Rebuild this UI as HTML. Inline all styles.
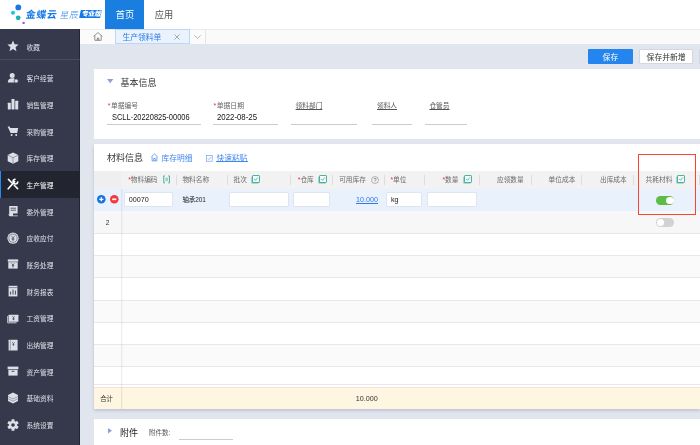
<!DOCTYPE html>
<html lang="zh-CN"><head><meta charset="utf-8"><title>生产领料单</title>
<style>
html,body{margin:0;padding:0;}
body{width:700px;height:445px;overflow:hidden;position:relative;background:#e1e5ee;font-family:"Liberation Sans","Noto Sans CJK SC",sans-serif;-webkit-text-size-adjust:none;}
.a{position:absolute;}
.t{position:absolute;white-space:nowrap;}
.u{text-decoration:underline;text-underline-offset:1px;text-decoration-thickness:0.6px;}
.r{color:#f03030;}
.inp{position:absolute;background:#fff;border:0.6px solid #dfe4ee;box-sizing:border-box;border-radius:1px;}
.sep{position:absolute;width:0.7px;background:#dcdde1;top:175px;height:10px;}
.ln{position:absolute;height:0.7px;background:#cbcccf;}
svg{position:absolute;overflow:visible;}
#w{position:absolute;left:0;top:0;width:700px;height:445px;will-change:transform;}
</style></head><body><div id="w">

<div class="a" style="left:0;top:0;width:700px;height:29px;background:#fff;"></div>
<svg style="left:0;top:0" width="105" height="29" viewBox="0 0 105 29">
<circle cx="18.3" cy="7.4" r="2.9" fill="#1478e6"/>
<circle cx="13.0" cy="12.8" r="2.0" fill="#18c0ee"/>
<circle cx="18.2" cy="17.8" r="2.4" fill="#16b4ac"/>
<circle cx="23.6" cy="22.9" r="1.2" fill="#a050f0"/>
</svg>
<div class="t " style="left:26px;top:8.70px;font-size:9.8px;color:#1478e6;line-height:12px;letter-spacing:0.7px;font-weight:700;transform:skewX(-8deg);transform-origin:0 50%;">金蝶云</div>
<div class="t " style="left:59.6px;top:8.80px;font-size:9.0px;color:#3a8cf0;line-height:12px;letter-spacing:0.5px;font-weight:300;transform:skewX(-10deg);transform-origin:0 50%;">星辰</div>
<div class="a" style="left:80.4px;top:10.4px;width:21.4px;height:7.8px;background:#1478e6;transform:skewX(-12deg);border-radius:0.5px;"></div>
<div class="t " style="left:81.8px;top:8.30px;font-size:6.4px;color:#fff;line-height:12px;font-weight:900;transform:skewX(-10deg);transform-origin:0 50%;">专业版</div>
<div class="a" style="left:105px;top:0;width:39px;height:29px;background:#1a7ee0;"></div>
<div class="t " style="left:115.8px;top:8.90px;font-size:9.2px;color:#fff;line-height:12px;">首页</div>
<div class="t " style="left:154.8px;top:8.90px;font-size:9.2px;color:#555;line-height:12px;">应用</div>
<div class="a" style="left:80px;top:29px;width:620px;height:15px;background:#fafafa;border-top:0.5px solid #ececec;box-sizing:border-box;"></div>
<div class="a" style="left:80px;top:29px;width:125px;height:15px;background:#fbfbfb;border-top:0.5px solid #ececec;box-sizing:border-box;"></div>
<div class="a" style="left:205px;top:29px;width:0.6px;height:15px;background:#e6e6e6;"></div>
<svg style="left:93px;top:32px" width="10" height="9" viewBox="0 0 10 9"><path d="M0.6 4.4 L5 0.6 L9.4 4.4 M1.8 3.6 V8.3 H8.2 V3.6 M4.3 8.3 V6 H5.7 V8.3" fill="none" stroke="#666" stroke-width="0.7" stroke-linejoin="round"/></svg>
<div class="a" style="left:115.3px;top:29.2px;width:75.2px;height:15.2px;background:#e9f2fd;border:0.6px solid #bcd6f6;box-sizing:border-box;"></div>
<div class="t " style="left:122.4px;top:31.90px;font-size:7.8px;color:#2b7be4;line-height:12px;">生产领料单</div>
<svg style="left:174.2px;top:34.2px" width="6" height="6" viewBox="0 0 6 6"><path d="M0.4 0.4 L5.6 5.6 M5.6 0.4 L0.4 5.6" stroke="#777" stroke-width="0.6" fill="none"/></svg>
<svg style="left:194px;top:35.3px" width="7" height="4" viewBox="0 0 7 4"><path d="M0.3 0.3 L3.5 3.4 L6.7 0.3" stroke="#888" stroke-width="0.6" fill="none"/></svg>
<div class="a" style="left:0;top:29px;width:80px;height:416px;background:#35394b;border-right:0.6px solid #23252f;box-sizing:border-box;"></div>
<div class="a" style="left:0;top:58.6px;width:80px;height:0.6px;background:#474b5d;"></div>
<div class="a" style="left:0;top:171.4px;width:80px;height:26.6px;background:#22242f;"></div>
<div class="a" style="left:0;top:171.4px;width:1.4px;height:26.6px;background:#2a8af5;"></div>
<div class="t " style="left:26.6px;top:41.60px;font-size:6.7px;color:#dfe2ea;line-height:12px;">收藏</div>
<svg style="left:7.300000000000001px;top:40.30px" width="12" height="12" viewBox="0 0 12 12"><polygon points="6.00,0.50 7.59,4.22 11.61,4.58 8.57,7.23 9.47,11.17 6.00,9.10 2.53,11.17 3.43,7.23 0.39,4.58 4.41,4.22" fill="#dcdfe8"/></svg>
<svg style="left:7.300000000000001px;top:71.80px" width="12" height="12" viewBox="0 0 12 12"><circle cx="5.2" cy="3.6" r="2.5" fill="#dcdfe8"/><path d="M0.8 10.6 C0.8 7.4 2.6 6.2 5.2 6.2 C7.2 6.2 8.4 6.8 9 8 L9 10.6 Z" fill="#dcdfe8"/><circle cx="9.2" cy="9" r="2.1" fill="#dcdfe8" stroke="#35394b" stroke-width="0.7"/></svg>
<div class="t " style="left:26.6px;top:73.20px;font-size:6.7px;color:#dfe2ea;line-height:12px;">客户经营</div>
<svg style="left:7.300000000000001px;top:98.47px" width="12" height="12" viewBox="0 0 12 12"><rect x="0.8" y="4.8" width="3" height="6.6" rx="0.4" fill="#dcdfe8"/><rect x="4.5" y="1" width="3" height="10.4" rx="0.4" fill="#dcdfe8"/><rect x="8.2" y="2.8" width="3" height="8.6" rx="0.4" fill="#dcdfe8"/></svg>
<div class="t " style="left:26.6px;top:99.87px;font-size:6.7px;color:#dfe2ea;line-height:12px;">销售管理</div>
<svg style="left:7.300000000000001px;top:125.14px" width="12" height="12" viewBox="0 0 12 12"><path d="M0.6 1.6 H2.4 L3.4 3 H11.2 L10.2 8 H3.6 Z" fill="#dcdfe8"/><circle cx="4.6" cy="10" r="1" fill="#dcdfe8"/><circle cx="9.2" cy="10" r="1" fill="#dcdfe8"/></svg>
<div class="t " style="left:26.6px;top:126.54px;font-size:6.7px;color:#dfe2ea;line-height:12px;">采购管理</div>
<svg style="left:7.300000000000001px;top:151.81px" width="12" height="12" viewBox="0 0 12 12"><path d="M6 0.5 L11.3 3 V9.2 L6 11.8 L0.7 9.2 V3 Z" fill="#dcdfe8"/><path d="M0.9 3.2 L6 5.7 L11.1 3.2 M6 5.7 V11.6" stroke="#6a6e80" stroke-width="0.6" fill="none"/></svg>
<div class="t " style="left:26.6px;top:153.21px;font-size:6.7px;color:#dfe2ea;line-height:12px;">库存管理</div>
<svg style="left:7.300000000000001px;top:178.48px" width="12" height="12" viewBox="0 0 12 12"><path d="M1.2 10.8 L7.6 3.6 M8 1.2 A2.4 2.4 0 1 0 10.8 4" stroke="#fff" stroke-width="1.6" fill="none" stroke-linecap="round"/><path d="M1.4 1.4 L5 5 M7.2 7.2 L10.6 10.6" stroke="#fff" stroke-width="1.5" fill="none" stroke-linecap="round"/></svg>
<div class="t " style="left:26.6px;top:179.88px;font-size:6.7px;color:#fff;line-height:12px;">生产管理</div>
<svg style="left:7.300000000000001px;top:205.15px" width="12" height="12" viewBox="0 0 12 12"><path d="M2.2 1 H10.6 V8.4 H6 V11 H2.2 Z" fill="#dcdfe8"/><path d="M3.6 3.2 H9 M3.6 5.2 H9" stroke="#35394b" stroke-width="0.8"/><path d="M0.6 8.6 L3 10.4 H10.8 V11.2 H2.6 Z" fill="#dcdfe8"/></svg>
<div class="t " style="left:26.6px;top:206.55px;font-size:6.7px;color:#dfe2ea;line-height:12px;">委外管理</div>
<svg style="left:7.300000000000001px;top:231.82px" width="12" height="12" viewBox="0 0 12 12"><circle cx="6" cy="6.2" r="5.6" fill="#dcdfe8"/><circle cx="6" cy="6.2" r="4.1" fill="none" stroke="#4a4e60" stroke-width="0.6"/><path d="M4.4 3.8 L6 5.9 L7.6 3.8 M6 5.9 V9 M4.6 6.4 H7.4 M4.6 7.6 H7.4" stroke="#4a4e60" stroke-width="0.7" fill="none"/></svg>
<div class="t " style="left:26.6px;top:233.22px;font-size:6.7px;color:#dfe2ea;line-height:12px;">应收应付</div>
<svg style="left:7.300000000000001px;top:258.49px" width="12" height="12" viewBox="0 0 12 12"><rect x="0.8" y="1.4" width="10.4" height="2.3" fill="#dcdfe8"/><rect x="1.3" y="4.2" width="9.4" height="6.4" fill="#dcdfe8"/><path d="M4.6 5.4 L6 7 L7.4 5.4 M6 7 V9.6 M4.8 7.6 H7.2" stroke="#35394b" stroke-width="0.7" fill="none"/></svg>
<div class="t " style="left:26.6px;top:259.89px;font-size:6.7px;color:#dfe2ea;line-height:12px;">账务处理</div>
<svg style="left:7.300000000000001px;top:285.16px" width="12" height="12" viewBox="0 0 12 12"><rect x="1.6" y="0.8" width="8.8" height="10.6" fill="#dcdfe8"/><path d="M3.6 9.6 V6.6 M6 9.6 V4.6 M8.4 9.6 V5.6" stroke="#35394b" stroke-width="0.9"/><path d="M1.6 2.6 H10.4" stroke="#35394b" stroke-width="0.5"/></svg>
<div class="t " style="left:26.6px;top:286.56px;font-size:6.7px;color:#dfe2ea;line-height:12px;">财务报表</div>
<svg style="left:7.300000000000001px;top:311.83px" width="12" height="12" viewBox="0 0 12 12"><rect x="1.6" y="2.8" width="9.8" height="7" rx="0.4" fill="#dcdfe8"/><path d="M0.7 4 V10.8 H9.6" stroke="#dcdfe8" stroke-width="0.9" fill="none"/><path d="M5.4 4.2 L6.5 5.6 L7.6 4.2 M6.5 5.6 V8.2 M5.5 6.4 H7.5 M5.5 7.3 H7.5" stroke="#35394b" stroke-width="0.6" fill="none"/></svg>
<div class="t " style="left:26.6px;top:313.23px;font-size:6.7px;color:#dfe2ea;line-height:12px;">工资管理</div>
<svg style="left:7.300000000000001px;top:338.50px" width="12" height="12" viewBox="0 0 12 12"><rect x="1.6" y="0.8" width="9" height="10.8" rx="0.4" fill="#dcdfe8"/><path d="M3.4 0.8 V11.6" stroke="#6a6e80" stroke-width="0.5"/><path d="M5.2 3.2 L6.4 4.6 L7.6 3.2 M6.4 4.6 V7 M5.4 5.4 H7.4" stroke="#35394b" stroke-width="0.6" fill="none"/></svg>
<div class="t " style="left:26.6px;top:339.90px;font-size:6.7px;color:#dfe2ea;line-height:12px;">出纳管理</div>
<svg style="left:7.300000000000001px;top:365.17px" width="12" height="12" viewBox="0 0 12 12"><rect x="0.6" y="1.6" width="10.8" height="2.6" fill="#dcdfe8"/><rect x="1.4" y="4.8" width="9.2" height="5.8" fill="#dcdfe8"/><rect x="4.6" y="5.8" width="2.8" height="0.9" fill="#35394b"/></svg>
<div class="t " style="left:26.6px;top:366.57px;font-size:6.7px;color:#dfe2ea;line-height:12px;">资产管理</div>
<svg style="left:7.300000000000001px;top:391.84px" width="12" height="12" viewBox="0 0 12 12"><path d="M6 0.4 L11 2.9 V8.9 L6 11.6 L1 8.9 V2.9 Z" fill="#dcdfe8"/><path d="M1 4.4 L6 7 L11 4.4 M1 6.6 L6 9.2 L11 6.6" stroke="#6a6e80" stroke-width="0.55" fill="none"/></svg>
<div class="t " style="left:26.6px;top:393.24px;font-size:6.7px;color:#dfe2ea;line-height:12px;">基础资料</div>
<svg style="left:7.300000000000001px;top:418.51px" width="12" height="12" viewBox="0 0 12 12"><circle cx="6" cy="6" r="4" fill="#dcdfe8"/><rect x="4.5" y="0.3" width="3" height="3" rx="0.5" fill="#dcdfe8" transform="rotate(0 6 6)"/><rect x="4.5" y="0.3" width="3" height="3" rx="0.5" fill="#dcdfe8" transform="rotate(60 6 6)"/><rect x="4.5" y="0.3" width="3" height="3" rx="0.5" fill="#dcdfe8" transform="rotate(120 6 6)"/><rect x="4.5" y="0.3" width="3" height="3" rx="0.5" fill="#dcdfe8" transform="rotate(180 6 6)"/><rect x="4.5" y="0.3" width="3" height="3" rx="0.5" fill="#dcdfe8" transform="rotate(240 6 6)"/><rect x="4.5" y="0.3" width="3" height="3" rx="0.5" fill="#dcdfe8" transform="rotate(300 6 6)"/><circle cx="6" cy="6" r="1.8" fill="#35394b"/></svg>
<div class="t " style="left:26.6px;top:419.91px;font-size:6.7px;color:#dfe2ea;line-height:12px;">系统设置</div>
<div class="a" style="left:588px;top:48.8px;width:44.6px;height:15.6px;background:#2585ee;border-radius:1px;"></div>
<div class="t " style="left:602.6px;top:51.50px;font-size:7.8px;color:#fff;line-height:12px;">保存</div>
<div class="a" style="left:639.4px;top:48.8px;width:53.2px;height:15.6px;background:#fff;border:0.6px solid #d3d6dc;box-sizing:border-box;border-radius:1px;"></div>
<div class="t " style="left:646.6px;top:51.50px;font-size:7.8px;color:#333;line-height:12px;">保存并新增</div>
<div class="a" style="left:699.4px;top:48.8px;width:10px;height:15.6px;background:#fff;border:0.6px solid #d3d6dc;box-sizing:border-box;"></div>
<div class="a" style="left:94px;top:69px;width:606px;height:70.4px;background:#fff;"></div>
<svg style="left:106.8px;top:79.2px" width="6.4" height="4.4" viewBox="0 0 6 4"><path d="M0 0 H6 L3 4 Z" fill="#929edb"/></svg>
<div class="t " style="left:120.4px;top:76.80px;font-size:9px;color:#333;line-height:12px;">基本信息</div>
<div class="t " style="left:107.8px;top:99.50px;font-size:6.8px;color:#666;line-height:12px;"><span class="r" style="margin-right:0.5px">*</span>单据编号</div>
<div class="t " style="left:111.8px;top:111.30px;font-size:8.5px;color:#151515;line-height:12px;transform:scaleX(0.878);transform-origin:0 50%;">SCLL-20220825-00006</div>
<div class="ln" style="left:107px;top:124.2px;width:94px;"></div>
<div class="t " style="left:213.6px;top:99.50px;font-size:6.8px;color:#666;line-height:12px;"><span class="r" style="margin-right:0.5px">*</span>单据日期</div>
<div class="t " style="left:217px;top:111.30px;font-size:8.5px;color:#151515;line-height:12px;transform:scaleX(0.92);transform-origin:0 50%;">2022-08-25</div>
<div class="ln" style="left:213px;top:124.2px;width:65px;"></div>
<div class="t u" style="left:295.6px;top:99.50px;font-size:6.7px;color:#555;line-height:12px;">领料部门</div>
<div class="ln" style="left:291.4px;top:124.2px;width:66px;"></div>
<div class="t u" style="left:377px;top:99.50px;font-size:6.7px;color:#555;line-height:12px;">领料人</div>
<div class="ln" style="left:372.4px;top:124.2px;width:39.6px;"></div>
<div class="t u" style="left:429.4px;top:99.50px;font-size:6.7px;color:#555;line-height:12px;">仓管员</div>
<div class="ln" style="left:425px;top:124.2px;width:41.6px;"></div>
<div class="a" style="left:94px;top:144px;width:606px;height:265.4px;background:#fff;box-shadow:0 1.5px 3px rgba(120,130,160,.38);"></div>
<div class="t " style="left:107px;top:152.00px;font-size:9px;color:#333;line-height:12px;">材料信息</div>
<svg style="left:151.3px;top:152.9px" width="7" height="8.8" viewBox="0 0 7 8.2"><path d="M0.4 3.6 L3.5 0.6 L6.6 3.6 M1.1 3.2 V7.6 H5.9 V3.2 M2.7 7.6 V5.2 H4.3 V7.6" fill="none" stroke="#4f8cf0" stroke-width="0.75" stroke-linejoin="round"/></svg>
<div class="t " style="left:161.6px;top:152.70px;font-size:7.75px;color:#3f86f0;line-height:12px;">库存明细</div>
<svg style="left:206px;top:154.6px" width="7" height="7" viewBox="0 0 7 7"><rect x="0.4" y="0.4" width="5.8" height="5.8" fill="none" stroke="#5b93f0" stroke-width="0.6"/><path d="M1.8 3.4 L3 4.6 L5 2" fill="none" stroke="#5b93f0" stroke-width="0.6"/></svg>
<div class="t " style="left:216.4px;top:152.70px;font-size:7.75px;color:#3f86f0;line-height:12px;">快速粘贴</div>
<div class="a" style="left:216.4px;top:161.4px;width:31.6px;height:0.6px;background:#3f86f0;"></div>
<div class="a" style="left:94px;top:170.6px;width:606px;height:18.4px;background:#f2f2f3;"></div>
<div class="a" style="left:94px;top:170.6px;width:27.3px;height:18.4px;background:#efeff0;"></div>
<div class="a" style="left:94px;top:189.00px;width:606px;height:22.20px;background:#e9f1fd;"></div>
<div class="a" style="left:94px;top:211.20px;width:606px;height:22.20px;background:#f7f7f7;"></div>
<div class="a" style="left:94px;top:233.40px;width:606px;height:22.20px;background:#fff;"></div>
<div class="a" style="left:94px;top:255.60px;width:606px;height:22.20px;background:#fafafa;"></div>
<div class="a" style="left:94px;top:277.80px;width:606px;height:22.20px;background:#fff;"></div>
<div class="a" style="left:94px;top:300.00px;width:606px;height:22.20px;background:#fafafa;"></div>
<div class="a" style="left:94px;top:322.20px;width:606px;height:22.20px;background:#fff;"></div>
<div class="a" style="left:94px;top:344.40px;width:606px;height:22.20px;background:#fafafa;"></div>
<div class="a" style="left:94px;top:366.60px;width:606px;height:17.80px;background:#fff;"></div>
<div class="a" style="left:94px;top:232.90px;width:606px;height:0.9px;background:#e7e8ea;"></div>
<div class="a" style="left:94px;top:255.10px;width:606px;height:0.9px;background:#e7e8ea;"></div>
<div class="a" style="left:94px;top:277.30px;width:606px;height:0.9px;background:#e7e8ea;"></div>
<div class="a" style="left:94px;top:299.50px;width:606px;height:0.9px;background:#e7e8ea;"></div>
<div class="a" style="left:94px;top:321.70px;width:606px;height:0.9px;background:#e7e8ea;"></div>
<div class="a" style="left:94px;top:343.90px;width:606px;height:0.9px;background:#e7e8ea;"></div>
<div class="a" style="left:94px;top:366.10px;width:606px;height:0.9px;background:#e7e8ea;"></div>
<div class="a" style="left:94px;top:383.90px;width:606px;height:0.9px;background:#e7e8ea;"></div>
<div class="a" style="left:121.2px;top:189px;width:2px;height:220.4px;background:linear-gradient(90deg,rgba(120,120,140,.16),rgba(120,120,140,0));"></div>
<div class="a" style="left:94px;top:386.8px;width:606px;height:22.6px;background:#fef6e0;border-top:0.6px solid #f9e2d4;box-sizing:border-box;"></div>
<div class="a" style="left:121.2px;top:386.8px;width:2px;height:22.6px;background:linear-gradient(90deg,rgba(150,130,90,.22),rgba(150,130,90,0));"></div>
<div class="t " style="left:100.2px;top:392.80px;font-size:6.4px;color:#333;line-height:12px;">合计</div>
<div class="t " style="left:355.8px;top:393.00px;font-size:7.2px;color:#333;line-height:12px;">10.000</div>
<div class="t " style="left:128.2px;top:174.20px;font-size:6.7px;color:#6c6c6c;line-height:12px;"><span class="r">*</span>物料编码</div>
<svg style="left:163px;top:175.4px" width="7.2" height="8.8" viewBox="0 0 8 9"><path d="M2.2 0.6 H0.8 V8.4 H2.2 M5.8 0.6 H7.2 V8.4 H5.8" fill="none" stroke="#3aa99a" stroke-width="1"/><path d="M3.1 2.6 V6.4 M4.1 2.6 V6.4 M5.1 2.6 V6.4" stroke="#3aa99a" stroke-width="0.5"/></svg>
<div class="t " style="left:182.4px;top:174.20px;font-size:6.7px;color:#6c6c6c;line-height:12px;">物料名称</div>
<div class="t " style="left:233.6px;top:174.20px;font-size:6.7px;color:#6c6c6c;line-height:12px;">批次</div>
<svg style="left:250.8px;top:175.3px" width="9" height="9" viewBox="0 0 9 9"><rect x="0.4" y="1.4" width="7.2" height="7.2" rx="0.7" fill="#6cc4b6"/><rect x="1.5" y="0.5" width="7" height="7" rx="0.6" fill="#f2fbf8" stroke="#3aa99a" stroke-width="0.9"/><path d="M3.2 3.9 L4.5 5.3 L6.9 2.5" fill="none" stroke="#3aa99a" stroke-width="0.8"/></svg>
<div class="t " style="left:297.8px;top:174.20px;font-size:6.7px;color:#6c6c6c;line-height:12px;"><span class="r">*</span>仓库</div>
<svg style="left:318.4px;top:175.3px" width="9" height="9" viewBox="0 0 9 9"><rect x="0.4" y="1.4" width="7.2" height="7.2" rx="0.7" fill="#6cc4b6"/><rect x="1.5" y="0.5" width="7" height="7" rx="0.6" fill="#f2fbf8" stroke="#3aa99a" stroke-width="0.9"/><path d="M3.2 3.9 L4.5 5.3 L6.9 2.5" fill="none" stroke="#3aa99a" stroke-width="0.8"/></svg>
<div class="t " style="left:339.2px;top:174.20px;font-size:6.7px;color:#6c6c6c;line-height:12px;">可用库存</div>
<svg style="left:371px;top:176px" width="8" height="8" viewBox="0 0 8 8"><circle cx="4" cy="4" r="3.5" fill="none" stroke="#777" stroke-width="0.5"/></svg>
<div class="t " style="left:373.4px;top:174.40px;font-size:5.6px;color:#666;line-height:12px;">?</div>
<div class="t " style="left:390.4px;top:174.20px;font-size:6.7px;color:#6c6c6c;line-height:12px;"><span class="r">*</span>单位</div>
<div class="t " style="left:442.4px;top:174.20px;font-size:6.7px;color:#6c6c6c;line-height:12px;"><span class="r">*</span>数量</div>
<svg style="left:463.4px;top:175.3px" width="9" height="9" viewBox="0 0 9 9"><rect x="0.4" y="1.4" width="7.2" height="7.2" rx="0.7" fill="#6cc4b6"/><rect x="1.5" y="0.5" width="7" height="7" rx="0.6" fill="#f2fbf8" stroke="#3aa99a" stroke-width="0.9"/><path d="M3.2 3.9 L4.5 5.3 L6.9 2.5" fill="none" stroke="#3aa99a" stroke-width="0.8"/></svg>
<div class="t " style="left:497px;top:174.20px;font-size:6.7px;color:#6c6c6c;line-height:12px;">应领数量</div>
<div class="t " style="left:548.6px;top:174.20px;font-size:6.7px;color:#6c6c6c;line-height:12px;">单位成本</div>
<div class="t " style="left:600px;top:174.20px;font-size:6.7px;color:#6c6c6c;line-height:12px;">出库成本</div>
<div class="t " style="left:645.6px;top:174.20px;font-size:6.7px;color:#6c6c6c;line-height:12px;">共耗材料</div>
<svg style="left:676.2px;top:175.3px" width="9" height="9" viewBox="0 0 9 9"><rect x="0.4" y="1.4" width="7.2" height="7.2" rx="0.7" fill="#6cc4b6"/><rect x="1.5" y="0.5" width="7" height="7" rx="0.6" fill="#f2fbf8" stroke="#3aa99a" stroke-width="0.9"/><path d="M3.2 3.9 L4.5 5.3 L6.9 2.5" fill="none" stroke="#3aa99a" stroke-width="0.8"/></svg>
<div class="sep" style="left:175.6px;"></div>
<div class="sep" style="left:226.6px;"></div>
<div class="sep" style="left:290.4px;"></div>
<div class="sep" style="left:332.4px;"></div>
<div class="sep" style="left:383.6px;"></div>
<div class="sep" style="left:424.4px;"></div>
<div class="sep" style="left:479.4px;"></div>
<div class="sep" style="left:530.6px;"></div>
<div class="sep" style="left:581.3px;"></div>
<div class="sep" style="left:632.5px;"></div>
<div class="sep" style="left:698.7px;"></div>
<svg style="left:96.6px;top:194.6px" width="8.6" height="8.6" viewBox="0 0 10 10"><circle cx="5" cy="5" r="5" fill="#1873e4"/><path d="M2.6 5 H7.4 M5 2.6 V7.4" stroke="#fff" stroke-width="1.5"/></svg>
<svg style="left:109.7px;top:194.7px" width="8.6" height="8.6" viewBox="0 0 10 10"><circle cx="5" cy="5" r="5" fill="#f63838"/><path d="M2.6 5 H7.4" stroke="#fff" stroke-width="2"/></svg>
<div class="inp" style="left:123.6px;top:192.4px;width:49.8px;height:14.8px;"></div>
<div class="t " style="left:128.8px;top:194.40px;font-size:7.2px;color:#222;line-height:12px;">00070</div>
<div class="t " style="left:182.4px;top:194.40px;font-size:6.4px;color:#222;line-height:12px;">轴承201</div>
<div class="inp" style="left:229.4px;top:192.4px;width:59.2px;height:14.8px;"></div>
<div class="inp" style="left:293.4px;top:192.4px;width:36.6px;height:14.8px;"></div>
<div class="t u" style="left:356px;top:194.40px;font-size:7.2px;color:#2f7be6;line-height:12px;">10.000</div>
<div class="inp" style="left:386.4px;top:192.4px;width:36.0px;height:14.8px;"></div>
<div class="t " style="left:391px;top:194.30px;font-size:7.2px;color:#222;line-height:12px;">kg</div>
<div class="inp" style="left:427.4px;top:192.4px;width:49.6px;height:14.8px;"></div>
<div class="a" style="left:656.2px;top:196px;width:18.2px;height:8.8px;border-radius:4.4px;background:#5cbc44;"></div>
<div class="a" style="left:666.2px;top:196.7px;width:7.4px;height:7.4px;border-radius:50%;background:#fff;"></div>
<div class="a" style="left:656.2px;top:218.2px;width:18.2px;height:8.8px;border-radius:4.4px;background:#d2d2d2;"></div>
<div class="a" style="left:657px;top:218.9px;width:7.4px;height:7.4px;border-radius:50%;background:#fff;"></div>
<div class="t " style="left:105.7px;top:216.60px;font-size:6.6px;color:#333;line-height:12px;">2</div>
<div class="a" style="left:638.4px;top:154px;width:57.2px;height:60.6px;border:1px solid #f8452f;box-sizing:border-box;"></div>
<div class="a" style="left:94px;top:418.8px;width:606px;height:30px;background:#fff;"></div>
<svg style="left:108.2px;top:428px" width="4" height="6" viewBox="0 0 4 6"><path d="M0 0 L4 2.7 L0 5.4 Z" fill="#929edb"/></svg>
<div class="t " style="left:120px;top:426.60px;font-size:9px;color:#222;line-height:12px;">附件</div>
<div class="t " style="left:149px;top:427.00px;font-size:6.5px;color:#555;line-height:12px;">附件数:</div>
<div class="ln" style="left:178.6px;top:438.8px;width:54px;"></div>
</div></body></html>
